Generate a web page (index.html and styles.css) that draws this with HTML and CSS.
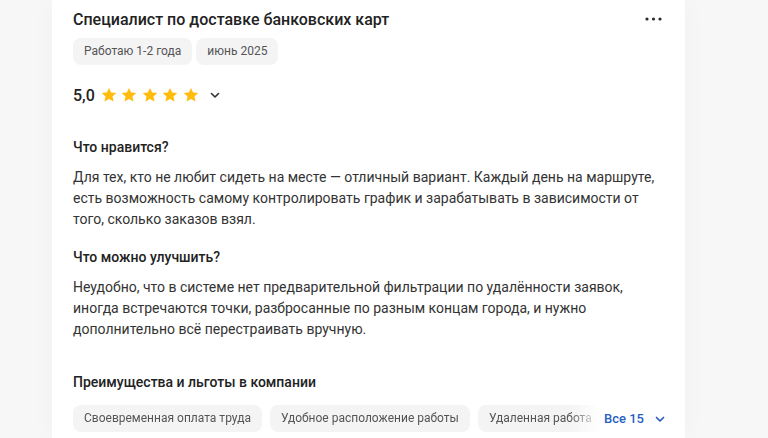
FILE: index.html
```html
<!DOCTYPE html>
<html lang="ru">
<head>
<meta charset="utf-8">
<link rel="stylesheet" href="styles.css">
</head>
<body>
<div class="page">
  <article class="card">
    <header class="head">
      <h2 class="title">Специалист по доставке банковских карт</h2>
      <button class="more" aria-label="Ещё">
        <svg width="17" height="4" viewBox="0 0 17 4"><circle cx="2" cy="2" r="1.6"/><circle cx="8.5" cy="2" r="1.6"/><circle cx="15" cy="2" r="1.6"/></svg>
      </button>
    </header>
    <div class="tags">
      <span class="tag">Работаю 1-2 года</span>
      <span class="tag">июнь 2025</span>
    </div>
    <div class="rating">
      <span class="score">5,0</span>
      <span class="stars">
        <svg viewBox="0 0 24 24"><path d="M12 2.5l2.9 6.2 6.8.7-5.1 4.6 1.5 6.7L12 17.3l-6.1 3.4 1.5-6.7-5.1-4.6 6.8-.7z"/></svg>
        <svg viewBox="0 0 24 24"><path d="M12 2.5l2.9 6.2 6.8.7-5.1 4.6 1.5 6.7L12 17.3l-6.1 3.4 1.5-6.7-5.1-4.6 6.8-.7z"/></svg>
        <svg viewBox="0 0 24 24"><path d="M12 2.5l2.9 6.2 6.8.7-5.1 4.6 1.5 6.7L12 17.3l-6.1 3.4 1.5-6.7-5.1-4.6 6.8-.7z"/></svg>
        <svg viewBox="0 0 24 24"><path d="M12 2.5l2.9 6.2 6.8.7-5.1 4.6 1.5 6.7L12 17.3l-6.1 3.4 1.5-6.7-5.1-4.6 6.8-.7z"/></svg>
        <svg viewBox="0 0 24 24"><path d="M12 2.5l2.9 6.2 6.8.7-5.1 4.6 1.5 6.7L12 17.3l-6.1 3.4 1.5-6.7-5.1-4.6 6.8-.7z"/></svg>
      </span>
      <svg class="chev" width="12" height="12" viewBox="0 0 12 12"><path d="M2.5 4.5L6 8l3.5-3.5" fill="none" stroke="#333" stroke-width="1.6" stroke-linecap="round" stroke-linejoin="round"/></svg>
    </div>

    <section class="block">
      <h3 class="subtitle">Что нравится?</h3>
      <p class="text">Для тех, кто не любит сидеть на месте — отличный вариант. Каждый день на маршруте, есть возможность самому контролировать график и зарабатывать в зависимости от того, сколько заказов взял.</p>
    </section>
    <section class="block second">
      <h3 class="subtitle">Что можно улучшить?</h3>
      <p class="text">Неудобно, что в системе нет предварительной фильтрации по удалённости заявок, иногда встречаются точки, разбросанные по разным концам города, и нужно дополнительно всё перестраивать вручную.</p>
    </section>

    <section class="benefits">
      <h3 class="subtitle">Преимущества и льготы в компании</h3>
      <div class="chips-row">
        <div class="chips">
          <span class="chip">Своевременная оплата труда</span>
          <span class="chip">Удобное расположение работы</span>
          <span class="chip">Удаленная работа</span>
        </div>
        <button class="all">Все 15
          <svg width="12" height="12" viewBox="0 0 12 12"><path d="M2.5 4.5L6 8l3.5-3.5" fill="none" stroke="#2a5fbf" stroke-width="1.7" stroke-linecap="round" stroke-linejoin="round"/></svg>
        </button>
      </div>
    </section>
  </article>
</div>
</body>
</html>
```

FILE: styles.css
```css
* { box-sizing: border-box; }
html, body { margin: 0; padding: 0; }
body {
  background: #f7f7f8;
  font-family: Roboto, "Noto Sans", Arial, sans-serif;
  color: #222;
  height: 438px;
  overflow: hidden;
}
.page {
  display: flex;
  padding-left: 52px;
}
.card {
  width: 633px;
  height: 438px;
  background: #fff;
  padding: 8px 23px 0 21px;
  box-shadow: 0 0 24px rgba(0,0,0,0.03);
  overflow: hidden;
}
.head {
  display: flex;
  align-items: center;
  justify-content: space-between;
  height: 24px;
}
.title {
  margin: 0;
  font-size: 16px;
  font-weight: 500;
  line-height: 24px;
  color: #222;
}
.more {
  border: 0;
  background: none;
  padding: 0;
  display: flex;
  fill: #2b2b2b;
  margin-top: -2px;
}
.tags {
  display: flex;
  gap: 4px;
  margin-top: 6px;
}
.tag {
  background: #f4f4f5;
  border-radius: 8px;
  padding: 0 11px;
  height: 27px;
  line-height: 27px;
  font-size: 12px;
  color: #555;
}
.rating {
  display: flex;
  align-items: center;
  margin-top: 19px;
  height: 22px;
}
.score {
  font-size: 16px;
  font-weight: 500;
  color: #222;
  margin-right: 5px;
}
.stars {
  display: flex;
  gap: 2.5px;
}
.stars svg {
  width: 18px;
  height: 18px;
  fill: #ffbc0d;
}
.chev {
  margin-left: 9px;
}
.block {
  margin-top: 31px;
}
.block.second {
  margin-top: 17px;
}
.subtitle {
  margin: 0;
  font-size: 14px;
  font-weight: 500;
  line-height: 20px;
  color: #222;
}
.text {
  margin: 10px 0 0;
  font-size: 14px;
  line-height: 21px;
  color: #333;
  max-width: 590px;
}
.benefits {
  margin-top: 32px;
}
.chips-row {
  display: flex;
  align-items: center;
  margin-top: 13px;
  height: 27px;
}
.chips {
  flex: none;
  display: flex;
  gap: 8px;
  overflow: hidden;
  width: 531px;
  white-space: nowrap;
  -webkit-mask-image: linear-gradient(to right, #000 calc(100% - 34px), transparent calc(100% - 4px));
  mask-image: linear-gradient(to right, #000 calc(100% - 34px), transparent calc(100% - 4px));
}
.chip {
  flex: none;
  background: #f4f4f5;
  border-radius: 8px;
  padding: 0 11px;
  height: 27px;
  line-height: 27px;
  font-size: 12px;
  color: #555;
}
.all {
  height: 27px;
  display: flex;
  align-items: center;
  gap: 10px;
  border: 0;
  padding: 0;
  white-space: nowrap;
  background: none;
  font-family: inherit;
  font-size: 13px;
  font-weight: 500;
  color: #2a5fbf;
}
```
